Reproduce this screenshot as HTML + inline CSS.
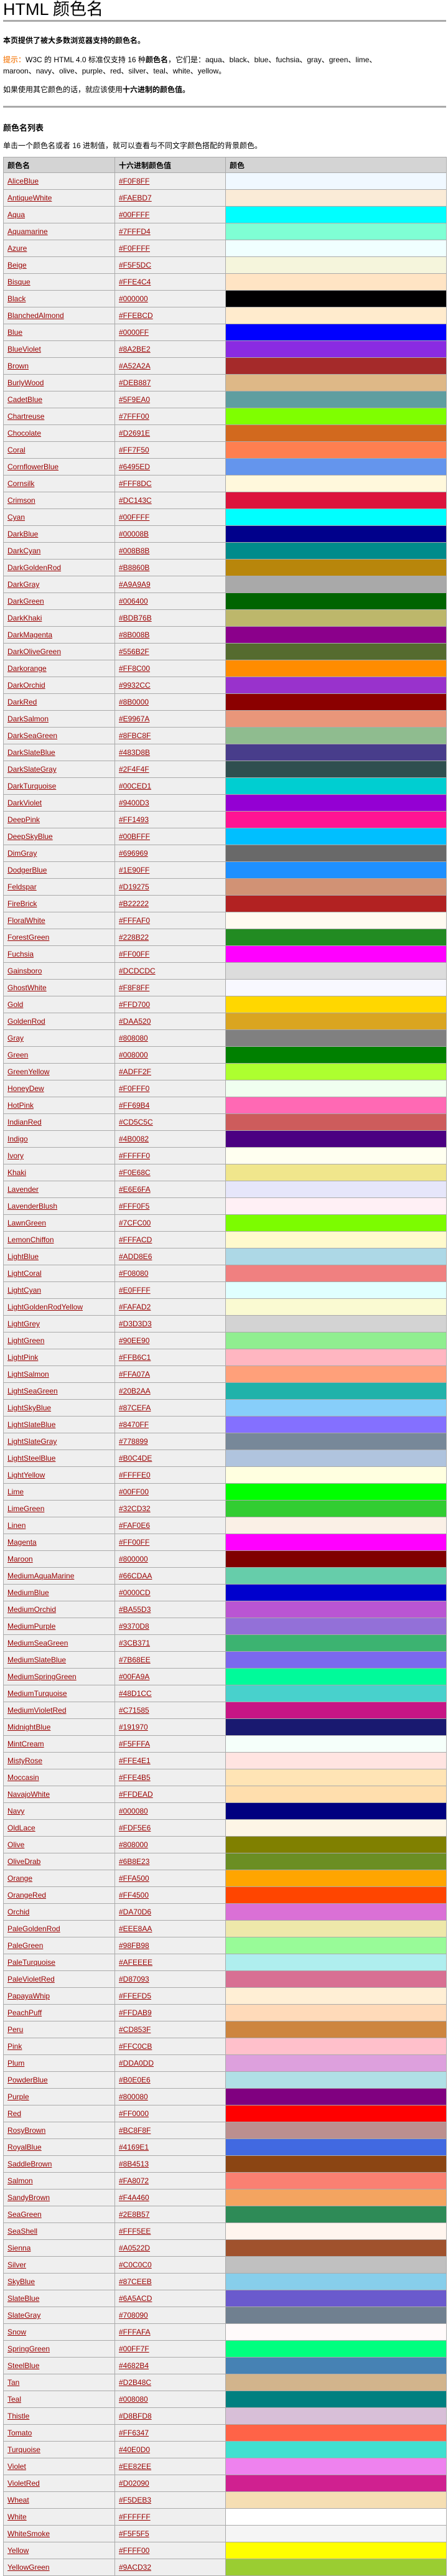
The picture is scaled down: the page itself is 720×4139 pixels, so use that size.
<!DOCTYPE html>
<html><head><meta charset="utf-8"><style>
body{margin:0;background:#fff;font-family:"Liberation Sans","WenQuanYi Zen Hei","Noto Sans CJK SC",sans-serif;font-size:12px;color:#000;width:720px;height:4139px;position:relative;overflow:hidden}
.a{position:absolute;left:5px;margin:0;white-space:nowrap}
h1{font-size:27px;font-weight:normal;line-height:30px;top:0}
.hr{position:absolute;left:5px;width:712px;height:3px;background:#aaa}
b{font-weight:bold}
.tip{color:#f7943e;font-weight:bold}
table{position:absolute;left:5px;top:252px;width:713px;border-collapse:collapse;table-layout:fixed}
td,th{border:1px solid #aaa;padding:0 0 0 6px;height:26px;text-align:left;font-size:12px;background:#efefef}
th{height:24px;background:#d4d4d4;font-weight:bold}
a{color:#900;text-decoration:underline}
</style></head><body>
<h1 class="a">HTML 颜色名</h1>
<div class="hr" style="top:32px"></div>
<p class="a" style="top:56px"><b>本页提供了被大多数浏览器支持的颜色名。</b></p>
<p class="a" style="top:87px;line-height:18px"><span class="tip">提示：</span>W3C 的 HTML 4.0 标准仅支持 16 种<b>颜色名</b>，它们是：aqua、black、blue、fuchsia、gray、green、lime、<br>maroon、navy、olive、purple、red、silver、teal、white、yellow。</p>
<p class="a" style="top:135px">如果使用其它颜色的话，就应该使用<b>十六进制的颜色值。</b></p>
<div class="hr" style="top:170px"></div>
<p class="a" style="top:195px"><b style="font-size:13px">颜色名列表</b></p>
<p class="a" style="top:225px">单击一个颜色名或者 16 进制值，就可以查看与不同文字颜色搭配的背景颜色。</p>
<table>
<colgroup><col style="width:179px"><col style="width:178px"><col></colgroup>
<tr><th>颜色名</th><th>十六进制颜色值</th><th>颜色</th></tr>
<tr><td><a>AliceBlue</a></td><td><a>#F0F8FF</a></td><td style="background:#F0F8FF"></td></tr>
<tr><td><a>AntiqueWhite</a></td><td><a>#FAEBD7</a></td><td style="background:#FAEBD7"></td></tr>
<tr><td><a>Aqua</a></td><td><a>#00FFFF</a></td><td style="background:#00FFFF"></td></tr>
<tr><td><a>Aquamarine</a></td><td><a>#7FFFD4</a></td><td style="background:#7FFFD4"></td></tr>
<tr><td><a>Azure</a></td><td><a>#F0FFFF</a></td><td style="background:#F0FFFF"></td></tr>
<tr><td><a>Beige</a></td><td><a>#F5F5DC</a></td><td style="background:#F5F5DC"></td></tr>
<tr><td><a>Bisque</a></td><td><a>#FFE4C4</a></td><td style="background:#FFE4C4"></td></tr>
<tr><td><a>Black</a></td><td><a>#000000</a></td><td style="background:#000000"></td></tr>
<tr><td><a>BlanchedAlmond</a></td><td><a>#FFEBCD</a></td><td style="background:#FFEBCD"></td></tr>
<tr><td><a>Blue</a></td><td><a>#0000FF</a></td><td style="background:#0000FF"></td></tr>
<tr><td><a>BlueViolet</a></td><td><a>#8A2BE2</a></td><td style="background:#8A2BE2"></td></tr>
<tr><td><a>Brown</a></td><td><a>#A52A2A</a></td><td style="background:#A52A2A"></td></tr>
<tr><td><a>BurlyWood</a></td><td><a>#DEB887</a></td><td style="background:#DEB887"></td></tr>
<tr><td><a>CadetBlue</a></td><td><a>#5F9EA0</a></td><td style="background:#5F9EA0"></td></tr>
<tr><td><a>Chartreuse</a></td><td><a>#7FFF00</a></td><td style="background:#7FFF00"></td></tr>
<tr><td><a>Chocolate</a></td><td><a>#D2691E</a></td><td style="background:#D2691E"></td></tr>
<tr><td><a>Coral</a></td><td><a>#FF7F50</a></td><td style="background:#FF7F50"></td></tr>
<tr><td><a>CornflowerBlue</a></td><td><a>#6495ED</a></td><td style="background:#6495ED"></td></tr>
<tr><td><a>Cornsilk</a></td><td><a>#FFF8DC</a></td><td style="background:#FFF8DC"></td></tr>
<tr><td><a>Crimson</a></td><td><a>#DC143C</a></td><td style="background:#DC143C"></td></tr>
<tr><td><a>Cyan</a></td><td><a>#00FFFF</a></td><td style="background:#00FFFF"></td></tr>
<tr><td><a>DarkBlue</a></td><td><a>#00008B</a></td><td style="background:#00008B"></td></tr>
<tr><td><a>DarkCyan</a></td><td><a>#008B8B</a></td><td style="background:#008B8B"></td></tr>
<tr><td><a>DarkGoldenRod</a></td><td><a>#B8860B</a></td><td style="background:#B8860B"></td></tr>
<tr><td><a>DarkGray</a></td><td><a>#A9A9A9</a></td><td style="background:#A9A9A9"></td></tr>
<tr><td><a>DarkGreen</a></td><td><a>#006400</a></td><td style="background:#006400"></td></tr>
<tr><td><a>DarkKhaki</a></td><td><a>#BDB76B</a></td><td style="background:#BDB76B"></td></tr>
<tr><td><a>DarkMagenta</a></td><td><a>#8B008B</a></td><td style="background:#8B008B"></td></tr>
<tr><td><a>DarkOliveGreen</a></td><td><a>#556B2F</a></td><td style="background:#556B2F"></td></tr>
<tr><td><a>Darkorange</a></td><td><a>#FF8C00</a></td><td style="background:#FF8C00"></td></tr>
<tr><td><a>DarkOrchid</a></td><td><a>#9932CC</a></td><td style="background:#9932CC"></td></tr>
<tr><td><a>DarkRed</a></td><td><a>#8B0000</a></td><td style="background:#8B0000"></td></tr>
<tr><td><a>DarkSalmon</a></td><td><a>#E9967A</a></td><td style="background:#E9967A"></td></tr>
<tr><td><a>DarkSeaGreen</a></td><td><a>#8FBC8F</a></td><td style="background:#8FBC8F"></td></tr>
<tr><td><a>DarkSlateBlue</a></td><td><a>#483D8B</a></td><td style="background:#483D8B"></td></tr>
<tr><td><a>DarkSlateGray</a></td><td><a>#2F4F4F</a></td><td style="background:#2F4F4F"></td></tr>
<tr><td><a>DarkTurquoise</a></td><td><a>#00CED1</a></td><td style="background:#00CED1"></td></tr>
<tr><td><a>DarkViolet</a></td><td><a>#9400D3</a></td><td style="background:#9400D3"></td></tr>
<tr><td><a>DeepPink</a></td><td><a>#FF1493</a></td><td style="background:#FF1493"></td></tr>
<tr><td><a>DeepSkyBlue</a></td><td><a>#00BFFF</a></td><td style="background:#00BFFF"></td></tr>
<tr><td><a>DimGray</a></td><td><a>#696969</a></td><td style="background:#696969"></td></tr>
<tr><td><a>DodgerBlue</a></td><td><a>#1E90FF</a></td><td style="background:#1E90FF"></td></tr>
<tr><td><a>Feldspar</a></td><td><a>#D19275</a></td><td style="background:#D19275"></td></tr>
<tr><td><a>FireBrick</a></td><td><a>#B22222</a></td><td style="background:#B22222"></td></tr>
<tr><td><a>FloralWhite</a></td><td><a>#FFFAF0</a></td><td style="background:#FFFAF0"></td></tr>
<tr><td><a>ForestGreen</a></td><td><a>#228B22</a></td><td style="background:#228B22"></td></tr>
<tr><td><a>Fuchsia</a></td><td><a>#FF00FF</a></td><td style="background:#FF00FF"></td></tr>
<tr><td><a>Gainsboro</a></td><td><a>#DCDCDC</a></td><td style="background:#DCDCDC"></td></tr>
<tr><td><a>GhostWhite</a></td><td><a>#F8F8FF</a></td><td style="background:#F8F8FF"></td></tr>
<tr><td><a>Gold</a></td><td><a>#FFD700</a></td><td style="background:#FFD700"></td></tr>
<tr><td><a>GoldenRod</a></td><td><a>#DAA520</a></td><td style="background:#DAA520"></td></tr>
<tr><td><a>Gray</a></td><td><a>#808080</a></td><td style="background:#808080"></td></tr>
<tr><td><a>Green</a></td><td><a>#008000</a></td><td style="background:#008000"></td></tr>
<tr><td><a>GreenYellow</a></td><td><a>#ADFF2F</a></td><td style="background:#ADFF2F"></td></tr>
<tr><td><a>HoneyDew</a></td><td><a>#F0FFF0</a></td><td style="background:#F0FFF0"></td></tr>
<tr><td><a>HotPink</a></td><td><a>#FF69B4</a></td><td style="background:#FF69B4"></td></tr>
<tr><td><a>IndianRed</a></td><td><a>#CD5C5C</a></td><td style="background:#CD5C5C"></td></tr>
<tr><td><a>Indigo</a></td><td><a>#4B0082</a></td><td style="background:#4B0082"></td></tr>
<tr><td><a>Ivory</a></td><td><a>#FFFFF0</a></td><td style="background:#FFFFF0"></td></tr>
<tr><td><a>Khaki</a></td><td><a>#F0E68C</a></td><td style="background:#F0E68C"></td></tr>
<tr><td><a>Lavender</a></td><td><a>#E6E6FA</a></td><td style="background:#E6E6FA"></td></tr>
<tr><td><a>LavenderBlush</a></td><td><a>#FFF0F5</a></td><td style="background:#FFF0F5"></td></tr>
<tr><td><a>LawnGreen</a></td><td><a>#7CFC00</a></td><td style="background:#7CFC00"></td></tr>
<tr><td><a>LemonChiffon</a></td><td><a>#FFFACD</a></td><td style="background:#FFFACD"></td></tr>
<tr><td><a>LightBlue</a></td><td><a>#ADD8E6</a></td><td style="background:#ADD8E6"></td></tr>
<tr><td><a>LightCoral</a></td><td><a>#F08080</a></td><td style="background:#F08080"></td></tr>
<tr><td><a>LightCyan</a></td><td><a>#E0FFFF</a></td><td style="background:#E0FFFF"></td></tr>
<tr><td><a>LightGoldenRodYellow</a></td><td><a>#FAFAD2</a></td><td style="background:#FAFAD2"></td></tr>
<tr><td><a>LightGrey</a></td><td><a>#D3D3D3</a></td><td style="background:#D3D3D3"></td></tr>
<tr><td><a>LightGreen</a></td><td><a>#90EE90</a></td><td style="background:#90EE90"></td></tr>
<tr><td><a>LightPink</a></td><td><a>#FFB6C1</a></td><td style="background:#FFB6C1"></td></tr>
<tr><td><a>LightSalmon</a></td><td><a>#FFA07A</a></td><td style="background:#FFA07A"></td></tr>
<tr><td><a>LightSeaGreen</a></td><td><a>#20B2AA</a></td><td style="background:#20B2AA"></td></tr>
<tr><td><a>LightSkyBlue</a></td><td><a>#87CEFA</a></td><td style="background:#87CEFA"></td></tr>
<tr><td><a>LightSlateBlue</a></td><td><a>#8470FF</a></td><td style="background:#8470FF"></td></tr>
<tr><td><a>LightSlateGray</a></td><td><a>#778899</a></td><td style="background:#778899"></td></tr>
<tr><td><a>LightSteelBlue</a></td><td><a>#B0C4DE</a></td><td style="background:#B0C4DE"></td></tr>
<tr><td><a>LightYellow</a></td><td><a>#FFFFE0</a></td><td style="background:#FFFFE0"></td></tr>
<tr><td><a>Lime</a></td><td><a>#00FF00</a></td><td style="background:#00FF00"></td></tr>
<tr><td><a>LimeGreen</a></td><td><a>#32CD32</a></td><td style="background:#32CD32"></td></tr>
<tr><td><a>Linen</a></td><td><a>#FAF0E6</a></td><td style="background:#FAF0E6"></td></tr>
<tr><td><a>Magenta</a></td><td><a>#FF00FF</a></td><td style="background:#FF00FF"></td></tr>
<tr><td><a>Maroon</a></td><td><a>#800000</a></td><td style="background:#800000"></td></tr>
<tr><td><a>MediumAquaMarine</a></td><td><a>#66CDAA</a></td><td style="background:#66CDAA"></td></tr>
<tr><td><a>MediumBlue</a></td><td><a>#0000CD</a></td><td style="background:#0000CD"></td></tr>
<tr><td><a>MediumOrchid</a></td><td><a>#BA55D3</a></td><td style="background:#BA55D3"></td></tr>
<tr><td><a>MediumPurple</a></td><td><a>#9370D8</a></td><td style="background:#9370D8"></td></tr>
<tr><td><a>MediumSeaGreen</a></td><td><a>#3CB371</a></td><td style="background:#3CB371"></td></tr>
<tr><td><a>MediumSlateBlue</a></td><td><a>#7B68EE</a></td><td style="background:#7B68EE"></td></tr>
<tr><td><a>MediumSpringGreen</a></td><td><a>#00FA9A</a></td><td style="background:#00FA9A"></td></tr>
<tr><td><a>MediumTurquoise</a></td><td><a>#48D1CC</a></td><td style="background:#48D1CC"></td></tr>
<tr><td><a>MediumVioletRed</a></td><td><a>#C71585</a></td><td style="background:#C71585"></td></tr>
<tr><td><a>MidnightBlue</a></td><td><a>#191970</a></td><td style="background:#191970"></td></tr>
<tr><td><a>MintCream</a></td><td><a>#F5FFFA</a></td><td style="background:#F5FFFA"></td></tr>
<tr><td><a>MistyRose</a></td><td><a>#FFE4E1</a></td><td style="background:#FFE4E1"></td></tr>
<tr><td><a>Moccasin</a></td><td><a>#FFE4B5</a></td><td style="background:#FFE4B5"></td></tr>
<tr><td><a>NavajoWhite</a></td><td><a>#FFDEAD</a></td><td style="background:#FFDEAD"></td></tr>
<tr><td><a>Navy</a></td><td><a>#000080</a></td><td style="background:#000080"></td></tr>
<tr><td><a>OldLace</a></td><td><a>#FDF5E6</a></td><td style="background:#FDF5E6"></td></tr>
<tr><td><a>Olive</a></td><td><a>#808000</a></td><td style="background:#808000"></td></tr>
<tr><td><a>OliveDrab</a></td><td><a>#6B8E23</a></td><td style="background:#6B8E23"></td></tr>
<tr><td><a>Orange</a></td><td><a>#FFA500</a></td><td style="background:#FFA500"></td></tr>
<tr><td><a>OrangeRed</a></td><td><a>#FF4500</a></td><td style="background:#FF4500"></td></tr>
<tr><td><a>Orchid</a></td><td><a>#DA70D6</a></td><td style="background:#DA70D6"></td></tr>
<tr><td><a>PaleGoldenRod</a></td><td><a>#EEE8AA</a></td><td style="background:#EEE8AA"></td></tr>
<tr><td><a>PaleGreen</a></td><td><a>#98FB98</a></td><td style="background:#98FB98"></td></tr>
<tr><td><a>PaleTurquoise</a></td><td><a>#AFEEEE</a></td><td style="background:#AFEEEE"></td></tr>
<tr><td><a>PaleVioletRed</a></td><td><a>#D87093</a></td><td style="background:#D87093"></td></tr>
<tr><td><a>PapayaWhip</a></td><td><a>#FFEFD5</a></td><td style="background:#FFEFD5"></td></tr>
<tr><td><a>PeachPuff</a></td><td><a>#FFDAB9</a></td><td style="background:#FFDAB9"></td></tr>
<tr><td><a>Peru</a></td><td><a>#CD853F</a></td><td style="background:#CD853F"></td></tr>
<tr><td><a>Pink</a></td><td><a>#FFC0CB</a></td><td style="background:#FFC0CB"></td></tr>
<tr><td><a>Plum</a></td><td><a>#DDA0DD</a></td><td style="background:#DDA0DD"></td></tr>
<tr><td><a>PowderBlue</a></td><td><a>#B0E0E6</a></td><td style="background:#B0E0E6"></td></tr>
<tr><td><a>Purple</a></td><td><a>#800080</a></td><td style="background:#800080"></td></tr>
<tr><td><a>Red</a></td><td><a>#FF0000</a></td><td style="background:#FF0000"></td></tr>
<tr><td><a>RosyBrown</a></td><td><a>#BC8F8F</a></td><td style="background:#BC8F8F"></td></tr>
<tr><td><a>RoyalBlue</a></td><td><a>#4169E1</a></td><td style="background:#4169E1"></td></tr>
<tr><td><a>SaddleBrown</a></td><td><a>#8B4513</a></td><td style="background:#8B4513"></td></tr>
<tr><td><a>Salmon</a></td><td><a>#FA8072</a></td><td style="background:#FA8072"></td></tr>
<tr><td><a>SandyBrown</a></td><td><a>#F4A460</a></td><td style="background:#F4A460"></td></tr>
<tr><td><a>SeaGreen</a></td><td><a>#2E8B57</a></td><td style="background:#2E8B57"></td></tr>
<tr><td><a>SeaShell</a></td><td><a>#FFF5EE</a></td><td style="background:#FFF5EE"></td></tr>
<tr><td><a>Sienna</a></td><td><a>#A0522D</a></td><td style="background:#A0522D"></td></tr>
<tr><td><a>Silver</a></td><td><a>#C0C0C0</a></td><td style="background:#C0C0C0"></td></tr>
<tr><td><a>SkyBlue</a></td><td><a>#87CEEB</a></td><td style="background:#87CEEB"></td></tr>
<tr><td><a>SlateBlue</a></td><td><a>#6A5ACD</a></td><td style="background:#6A5ACD"></td></tr>
<tr><td><a>SlateGray</a></td><td><a>#708090</a></td><td style="background:#708090"></td></tr>
<tr><td><a>Snow</a></td><td><a>#FFFAFA</a></td><td style="background:#FFFAFA"></td></tr>
<tr><td><a>SpringGreen</a></td><td><a>#00FF7F</a></td><td style="background:#00FF7F"></td></tr>
<tr><td><a>SteelBlue</a></td><td><a>#4682B4</a></td><td style="background:#4682B4"></td></tr>
<tr><td><a>Tan</a></td><td><a>#D2B48C</a></td><td style="background:#D2B48C"></td></tr>
<tr><td><a>Teal</a></td><td><a>#008080</a></td><td style="background:#008080"></td></tr>
<tr><td><a>Thistle</a></td><td><a>#D8BFD8</a></td><td style="background:#D8BFD8"></td></tr>
<tr><td><a>Tomato</a></td><td><a>#FF6347</a></td><td style="background:#FF6347"></td></tr>
<tr><td><a>Turquoise</a></td><td><a>#40E0D0</a></td><td style="background:#40E0D0"></td></tr>
<tr><td><a>Violet</a></td><td><a>#EE82EE</a></td><td style="background:#EE82EE"></td></tr>
<tr><td><a>VioletRed</a></td><td><a>#D02090</a></td><td style="background:#D02090"></td></tr>
<tr><td><a>Wheat</a></td><td><a>#F5DEB3</a></td><td style="background:#F5DEB3"></td></tr>
<tr><td><a>White</a></td><td><a>#FFFFFF</a></td><td style="background:#FFFFFF"></td></tr>
<tr><td><a>WhiteSmoke</a></td><td><a>#F5F5F5</a></td><td style="background:#F5F5F5"></td></tr>
<tr><td><a>Yellow</a></td><td><a>#FFFF00</a></td><td style="background:#FFFF00"></td></tr>
<tr><td><a>YellowGreen</a></td><td><a>#9ACD32</a></td><td style="background:#9ACD32"></td></tr>
</table>
</body></html>
